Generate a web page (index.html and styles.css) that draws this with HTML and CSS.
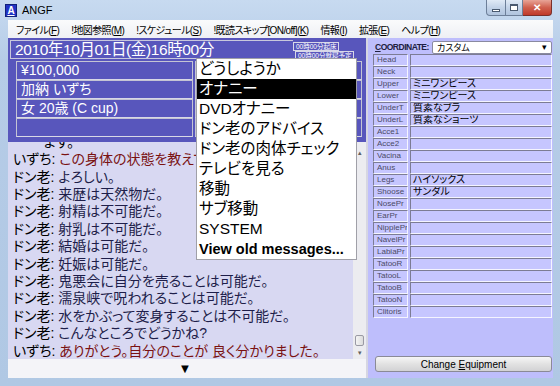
FILE: index.html
```html
<!DOCTYPE html>
<html lang="ja">
<head>
  <meta charset="UTF-8">
  <title>ANGF</title>
  <link rel="stylesheet" href="styles.css">
</head>
<body>
  <div class="window">
    <div class="titlebar">
      <span class="app-icon">A</span>
      <span class="title">ANGF</span>
      <div class="win-buttons">
        <span class="wbtn min"><i></i></span>
        <span class="wbtn max"><i></i></span>
        <span class="wbtn close">✕</span>
      </div>
    </div>

    <div class="frame">
      <div class="menubar">
        <span class="menu-item">ファイル(<u>F</u>)</span>
        <span class="menu-item">!地図参照(<u>M</u>)</span>
        <span class="menu-item">!スケジュール(<u>S</u>)</span>
        <span class="menu-item">!既読スキップ[ON/off](<u>K</u>)</span>
        <span class="menu-item">情報(<u>I</u>)</span>
        <span class="menu-item">拡張(<u>E</u>)</span>
        <span class="menu-item">ヘルプ(<u>H</u>)</span>
      </div>

      <div class="client">
        <div class="main">
          <!-- ステータス -->
          <div class="status">
            <div class="date-row">
              <div class="date">2010年10月01日(金)16時00分</div>
              <div class="clock-tags">
                <span class="tag">00時00分起床</span>
                <span class="tag">00時00分就寝予定</span>
              </div>
            </div>
            <div class="info-grid">
              <div class="info">¥100,000</div>
              <div class="info"></div>
              <div class="info">加納 いずち</div>
              <div class="info"></div>
              <div class="info">女 20歳 (C cup)</div>
              <div class="info"></div>
              <div class="info"></div>
              <div class="info"></div>
            </div>
          </div>

          <!-- メッセージログ -->
          <div class="log">
            <div class="log-lines">
              <div class="line cont">ます。</div>
              <div class="line"><span class="who">いずち:</span> <span class="izu">この身体の状態を教えてください。</span></div>
              <div class="line"><span class="who">ドン老:</span> <span class="don">よろしい。</span></div>
              <div class="line"><span class="who">ドン老:</span> <span class="don">来歴は天然物だ。</span></div>
              <div class="line"><span class="who">ドン老:</span> <span class="don">射精は不可能だ。</span></div>
              <div class="line"><span class="who">ドン老:</span> <span class="don">射乳は不可能だ。</span></div>
              <div class="line"><span class="who">ドン老:</span> <span class="don">結婚は可能だ。</span></div>
              <div class="line"><span class="who">ドン老:</span> <span class="don">妊娠は可能だ。</span></div>
              <div class="line"><span class="who">ドン老:</span> <span class="don">鬼悪会に自分を売ることは可能だ。</span></div>
              <div class="line"><span class="who">ドン老:</span> <span class="don">濡泉峡で呪われることは可能だ。</span></div>
              <div class="line"><span class="who">ドン老:</span> <span class="don">水をかぶって変身することは不可能だ。</span></div>
              <div class="line"><span class="who">ドン老:</span> <span class="don">こんなところでどうかね?</span></div>
              <div class="line"><span class="who">いずち:</span> <span class="izu">ありがとう。自分のことが 良く分かりました。</span></div>
            </div>
            <div class="scrollbar">
              <span class="sb-arrow">▴</span>
              <span class="sb-thumb"></span>
              <span class="sb-arrow">▾</span>
            </div>
          </div>

          <div class="more">▼</div>

          <!-- コマンドメニュー -->
          <ul class="popup">
            <li>どうしようか</li>
            <li class="selected">オナニー</li>
            <li>DVDオナニー</li>
            <li>ドン老のアドバイス</li>
            <li>ドン老の肉体チェック</li>
            <li>テレビを見る</li>
            <li>移動</li>
            <li>サブ移動</li>
            <li>SYSTEM</li>
            <li class="old">View old messages...</li>
          </ul>
        </div>

        <!-- 装備 -->
        <div class="equip">
          <div class="coord-row">
            <span class="coord-label"><u>C</u>OORDINATE:</span>
            <div class="coord-select">
              <span>カスタム</span>
              <span class="drop">▾</span>
            </div>
          </div>
          <div class="slots">
            <div class="slot-name">Head</div><div class="slot-value"></div>
            <div class="slot-name">Neck</div><div class="slot-value"></div>
            <div class="slot-name">Upper</div><div class="slot-value">ミニワンピース</div>
            <div class="slot-name">Lower</div><div class="slot-value">ミニワンピース</div>
            <div class="slot-name">UnderT</div><div class="slot-value">質素なブラ</div>
            <div class="slot-name">UnderL</div><div class="slot-value">質素なショーツ</div>
            <div class="slot-name">Acce1</div><div class="slot-value"></div>
            <div class="slot-name">Acce2</div><div class="slot-value"></div>
            <div class="slot-name">Vacina</div><div class="slot-value"></div>
            <div class="slot-name">Anus</div><div class="slot-value"></div>
            <div class="slot-name">Legs</div><div class="slot-value">ハイソックス</div>
            <div class="slot-name">Shoose</div><div class="slot-value">サンダル</div>
            <div class="slot-name">NosePr</div><div class="slot-value"></div>
            <div class="slot-name">EarPr</div><div class="slot-value"></div>
            <div class="slot-name">NipplePr</div><div class="slot-value"></div>
            <div class="slot-name">NavelPr</div><div class="slot-value"></div>
            <div class="slot-name">LabiaPr</div><div class="slot-value"></div>
            <div class="slot-name">TatooR</div><div class="slot-value"></div>
            <div class="slot-name">TatooL</div><div class="slot-value"></div>
            <div class="slot-name">TatooB</div><div class="slot-value"></div>
            <div class="slot-name">TatooN</div><div class="slot-value"></div>
            <div class="slot-name">Clitoris</div><div class="slot-value"></div>
          </div>
          <button class="change-btn">Change <u>E</u>quipment</button>
        </div>
      </div>
    </div>
  </div>
</body>
</html>
```

FILE: styles.css
```css
* {
  box-sizing: border-box;
  margin: 0;
  padding: 0;
}

body {
  width: 560px;
  height: 386px;
  overflow: hidden;
  font-family: "Liberation Sans", "Noto Sans CJK JP", sans-serif;
  font-feature-settings: "palt";
  background: #b8cfe9;
}

.window {
  width: 560px;
  height: 386px;
  display: flex;
  flex-direction: column;
  background: linear-gradient(#c7daf0, #b6cce7 60px, #b0c8e4);
}

/* タイトルバー */
.titlebar {
  height: 20px;
  display: flex;
  align-items: center;
  padding-left: 5px;
}

.app-icon {
  width: 12px;
  height: 13px;
  background: #2233c4;
  border: 1px solid #10207a;
  color: #fff;
  font: bold 10px "Liberation Sans", sans-serif;
  display: flex;
  align-items: center;
  justify-content: center;
  text-decoration: underline;
}

.title {
  margin-left: 5px;
  font-size: 11px;
  color: #000;
}

.win-buttons {
  margin-left: auto;
  margin-right: 8px;
  align-self: flex-start;
  display: flex;
}

.wbtn {
  height: 16px;
  display: flex;
  align-items: center;
  justify-content: center;
  border: 1px solid #6d7f99;
  border-top: none;
  background: linear-gradient(#e0eaf6, #c3d3e8 50%, #b0c4de);
}

.wbtn.min {
  width: 20px;
  border-radius: 0 0 0 4px;
}

.wbtn.max {
  width: 17px;
  border-left: none;
}

.wbtn.close {
  width: 29px;
  border-left: none;
  border-radius: 0 0 4px 0;
  border-color: #7a2f2a;
  background: linear-gradient(#e8a497, #d0604e 50%, #c0392a);
  color: #fff;
  font-size: 10px;
  font-weight: bold;
}

.wbtn.min i {
  width: 8px;
  height: 3px;
  margin-top: 5px;
  background: #fff;
  border: 1px solid #4a5a70;
}

.wbtn.max i {
  width: 8px;
  height: 7px;
  border: 1px solid #4a5a70;
  border-top-width: 2px;
  background: #fff;
}

.frame {
  flex: 1;
  display: flex;
  flex-direction: column;
  padding: 0 7px 8px 8px;
}

/* メニュー */
.menubar {
  height: 18px;
  display: flex;
  align-items: center;
  padding-left: 2px;
  background: linear-gradient(#fafbfc, #eef0f4);
  font-size: 10px;
  letter-spacing: -0.6px;
  color: #000;
}

.menu-item {
  padding: 0 6px;
}

.client {
  height: 340px;
  display: flex;
  gap: 2px;
  background: #d6d6e2;
}

/* 左側 */
.main {
  width: 358px;
  display: flex;
  flex-direction: column;
  position: relative;
}

.status {
  height: 104px;
  background: #5856bc;
  color: #fff;
  padding: 2px 4px 0 2px;
}

.date-row {
  display: flex;
  height: 19px;
}

.date {
  width: 283px;
  border: 1px solid #c8c8dc;
  border-right: none;
  font-size: 15.5px;
  letter-spacing: -0.4px;
  line-height: 17px;
  padding-left: 4px;
}

.clock-tags {
  display: flex;
  flex-direction: column;
  align-items: flex-start;
  padding-top: 2px;
}

.tag {
  font-size: 6.5px;
  line-height: 7px;
  border: 1px solid #d8d8e8;
  padding: 0 2px;
}

.tag + .tag {
  margin-left: 2px;
}

.info-grid {
  margin: 2px 0 0 6px;
  display: grid;
  grid-template-columns: 177px 167px;
  grid-auto-rows: 19px;
  column-gap: 2px;
}

.info {
  border: 1px solid #c4c4d4;
  border-bottom-color: #d8d8e6;
  font-size: 14px;
  line-height: 17px;
  padding-left: 4px;
}

.log {
  height: 217px;
  display: flex;
  background: #d8d8f2;
}

.log-lines {
  flex: 1;
  overflow: hidden;
  display: flex;
  flex-direction: column;
  justify-content: flex-end;
  padding-left: 5px;
  font-size: 14px;
  line-height: 17.4px;
  white-space: nowrap;
}

.line:last-child {
  margin-bottom: -1px;
}

.line.cont {
  padding-left: 30px;
}

.who {
  color: #000;
}

.don {
  color: #1e1e4a;
}

.izu {
  color: #7a1212;
}

.scrollbar {
  width: 13px;
  display: flex;
  flex-direction: column;
  align-items: center;
  background: #ececf0;
  color: #606060;
  font-size: 7px;
  line-height: 9px;
  padding: 6px 0 2px;
}

.sb-thumb {
  margin-top: auto;
  width: 9px;
  height: 11px;
  border: 1px solid #9a9aa4;
  border-radius: 2px;
  background: linear-gradient(90deg, #f4f4f4, #dcdcdc);
  margin-bottom: 2px;
}

.more {
  flex: 1;
  background: #f4f4f8;
  text-align: center;
  font-size: 13px;
  line-height: 19px;
  padding-right: 4px;
  color: #000;
}

.popup {
  position: absolute;
  left: 188px;
  top: 20px;
  width: 161px;
  list-style: none;
  background: #fff;
  border: 1px solid #a0a0a8;
  font-size: 15.5px;
  line-height: 20px;
  color: #000;
}

.popup li {
  padding-left: 2px;
  white-space: nowrap;
}

.popup li.selected {
  background: #000;
  color: #fff;
}

.popup li.old {
  font-weight: bold;
  font-size: 14.5px;
}

/* 右側：装備 */
.equip {
  flex: 1;
  background: #bebefc;
  display: flex;
  flex-direction: column;
  padding: 2px 1px 0 5px;
}

.coord-row {
  height: 14px;
  display: flex;
  align-items: center;
}

.coord-label {
  width: 59px;
  padding-left: 2px;
  font-size: 8.5px;
  letter-spacing: -0.5px;
  font-weight: bold;
  color: #202040;
  white-space: nowrap;
}

.coord-select {
  flex: 1;
  height: 13px;
  display: flex;
  align-items: center;
  justify-content: space-between;
  background: #fff;
  border: 1px solid #8a8aa0;
  border-radius: 2px;
  font-size: 9px;
  padding: 0 4px;
}

.drop {
  font-size: 9px;
}

.slots {
  display: grid;
  grid-template-columns: 35px 142px;
  grid-auto-rows: 12px;
  column-gap: 2px;
}

.slot-name,
.slot-value {
  border: 1px solid #7c7c94;
  border-right-color: #f4f4ff;
  border-bottom-color: #f4f4ff;
  background: #c6c6ff;
  white-space: nowrap;
  overflow: hidden;
}

.slot-name {
  font-size: 8px;
  line-height: 10px;
  color: #4a4a66;
  padding-left: 3px;
}

.slot-value {
  font-size: 10px;
  line-height: 10px;
  color: #000;
  padding-left: 2px;
}

.change-btn {
  margin: auto 0 6px 2px;
  height: 16px;
  width: 177px;
  border: 1px solid #8a8a96;
  border-radius: 3px;
  background: linear-gradient(#f6f6f6, #e2e2e2 50%, #d2d2d4);
  font-family: "Liberation Sans", sans-serif;
  font-size: 10px;
  color: #000;
}
```
